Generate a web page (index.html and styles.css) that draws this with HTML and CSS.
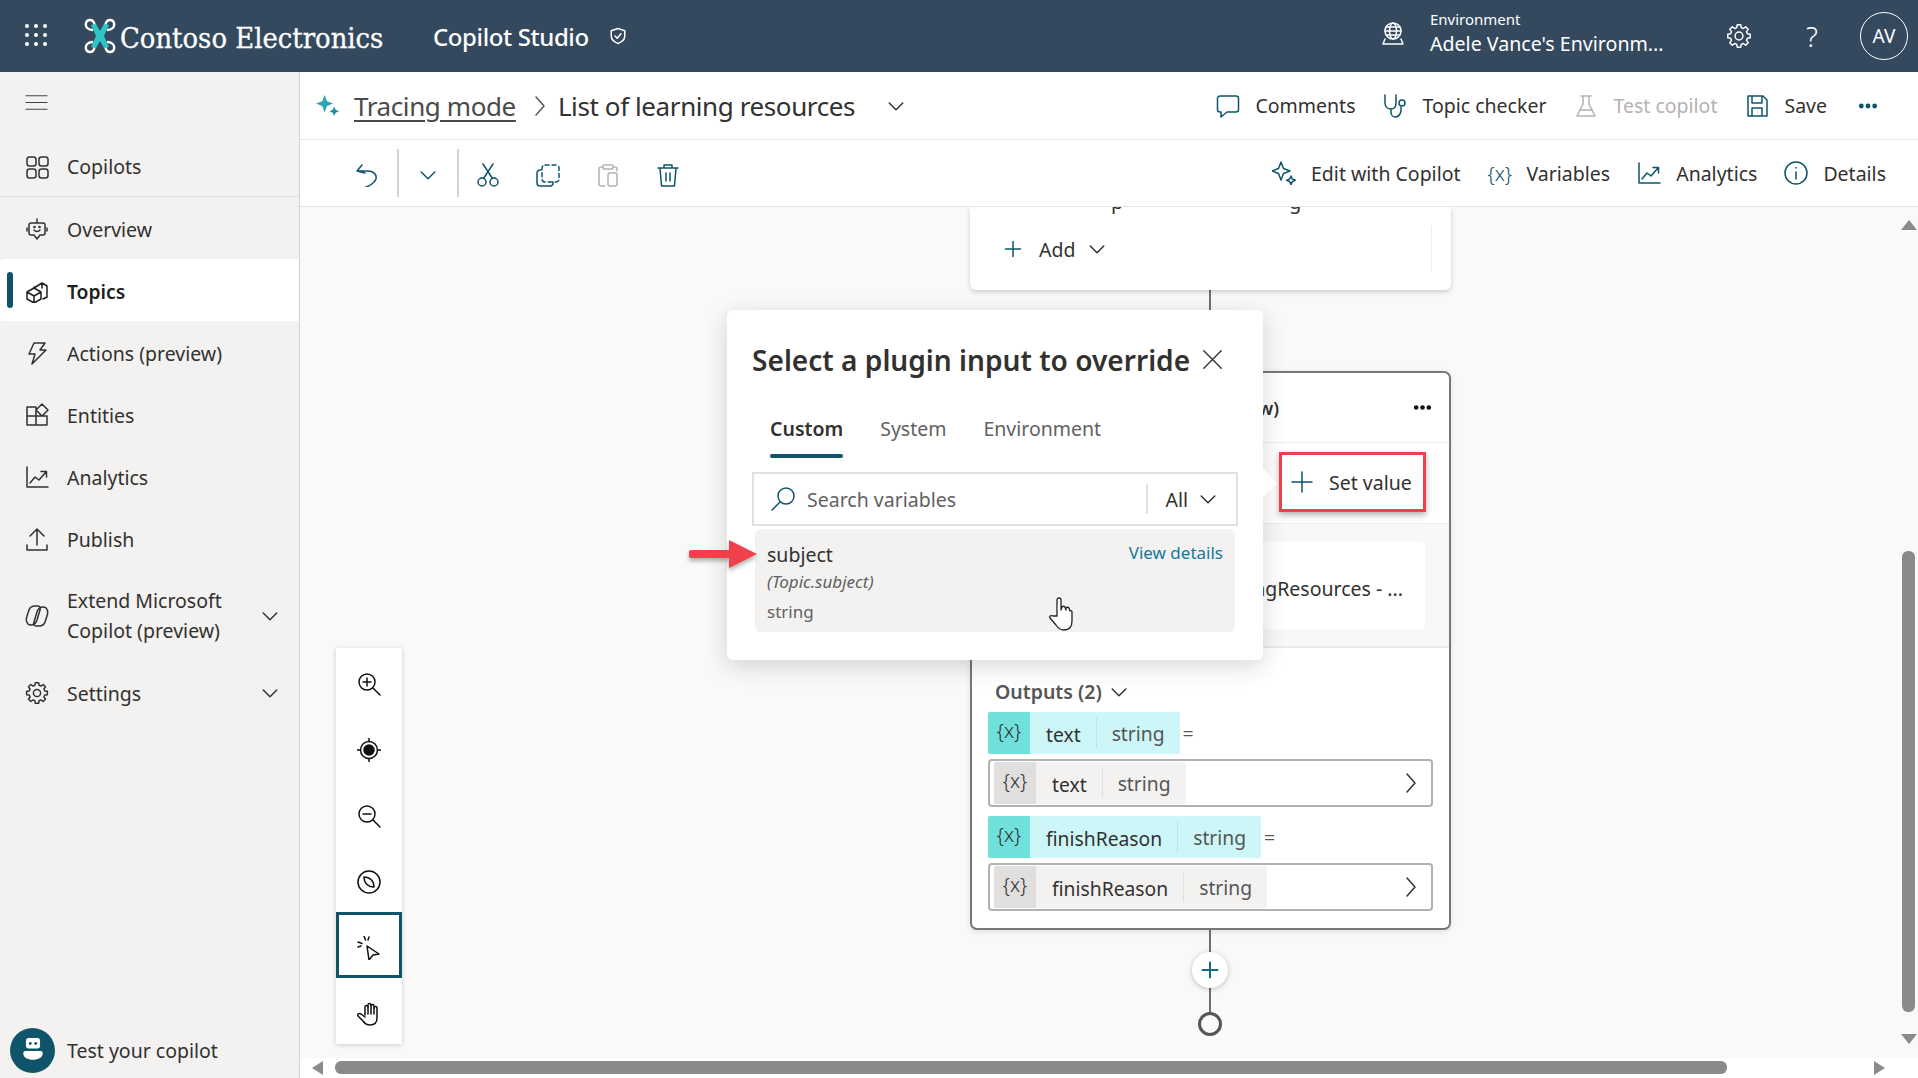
FILE: index.html
```html
<!DOCTYPE html>
<html lang="en">
<head>
  <meta charset="UTF-8">
  <title>Copilot Studio</title>
  <link rel="stylesheet" href="styles.css">
</head>
<body>
  <svg class="sprite" aria-hidden="true">
    <symbol id="chev" viewBox="0 0 24 24"><path d="M3 8l9 9 9-9"/></symbol>
    <symbol id="plus" viewBox="0 0 24 24"><path d="M12 2v20M2 12h20"/></symbol>
    <symbol id="gear" viewBox="0 0 24 24"><path d="M9.93 4.27 10.36 1.63 13.64 1.63 14.07 4.27 16 5.07 18.17 3.51 20.49 5.83 18.93 8 19.73 9.93 22.37 10.36 22.37 13.64 19.73 14.07 18.93 16 20.49 18.17 18.17 20.49 16 18.93 14.07 19.73 13.64 22.37 10.36 22.37 9.93 19.73 8 18.93 5.83 20.49 3.51 18.17 5.07 16 4.27 14.07 1.63 13.64 1.63 10.36 4.27 9.93 5.07 8 3.51 5.83 5.83 3.51 8 5.07Z"/><circle cx="12" cy="12" r="3.6"/></symbol>
    <symbol id="trend" viewBox="0 0 24 24"><path d="M2 2v20h21M5 18l5-6 4 3 7-8M16 6.5h5.5V12"/></symbol>
    <symbol id="dots" viewBox="0 0 24 24"><circle cx="4" cy="12" r="2" class="solid"/><circle cx="12" cy="12" r="2" class="solid"/><circle cx="20" cy="12" r="2" class="solid"/></symbol>
  </svg>

  <header class="topbar">
    <svg class="waffle" viewBox="0 0 22 22"><g fill="#fff"><circle cx="2" cy="2" r="2"/><circle cx="11" cy="2" r="2"/><circle cx="20" cy="2" r="2"/><circle cx="2" cy="11" r="2"/><circle cx="11" cy="11" r="2"/><circle cx="20" cy="11" r="2"/><circle cx="2" cy="20" r="2"/><circle cx="11" cy="20" r="2"/><circle cx="20" cy="20" r="2"/></g></svg>
    <svg class="logo" viewBox="0 0 32 36">
      <path d="M9 12C4 12 1 9 2 5s7-4 8 0l2 5M23 12c5 0 8-3 7-7s-7-4-8 0l-2 5M9 24c-5 0-8 3-7 7s7 4 8 0l2-5M23 24c5 0 8 3 7 7s-7 4-8 0l-2-5" fill="none" stroke="#fff" stroke-width="2.4"/>
      <path d="M7 7l5-1 4 7 4-7 5 1-5 11 5 11-5 1-4-7-4 7-5-1 5-11z" fill="#2cc4c4"/>
    </svg>
    <span class="brand">Contoso Electronics</span>
    <span class="product">Copilot Studio</span>
    <svg class="ic shield" viewBox="0 0 24 24"><path d="M12 2l9 3v7c0 5-4 8-9 10-5-2-9-5-9-10V5z"/><path d="M8 12l3 3 5-6"/></svg>
    <div class="env">
      <svg class="ic env-icon" viewBox="0 0 24 24"><circle cx="12" cy="9" r="8"/><ellipse cx="12" cy="9" rx="3.5" ry="8"/><path d="M4 9h16M5 5h14M5 13h14M4 17l-2 5h20l-2-5"/></svg>
      <div>
        <div class="env-label">Environment</div>
        <div class="env-name">Adele Vance's Environm...</div>
      </div>
    </div>
    <svg class="ic top-gear"><use href="#gear"/></svg>
    <span class="help">?</span>
    <span class="avatar">AV</span>
  </header>

  <div class="main">
    <nav class="sidebar">
      <div class="burger"><svg class="ic" viewBox="0 0 24 24"><path d="M1 5h22M1 12h22M1 19h22"/></svg></div>
      <a class="nav-item nav-first">
        <svg class="ic" viewBox="0 0 24 24"><rect x="2" y="2" width="9" height="9" rx="2.5"/><rect x="14" y="2" width="9" height="9" rx="2.5"/><rect x="2" y="14" width="9" height="9" rx="2.5"/><rect x="14" y="14" width="9" height="9" rx="2.5"/></svg>
        Copilots
      </a>
      <a class="nav-item">
        <svg class="ic" viewBox="0 0 24 24"><path d="M12 2v4M6 6h12a2 2 0 0 1 2 2v8a2 2 0 0 1-2 2h-3l-3 4-3-4H6a2 2 0 0 1-2-2V8a2 2 0 0 1 2-2zM2 11v3M22 11v3M9 13c1.500 2 4.500 2 6 0"/><circle cx="9.500" cy="10" r=".6"/><circle cx="14.500" cy="10" r=".6"/></svg>
        Overview
      </a>
      <a class="nav-item active">
        <svg class="ic" viewBox="0 0 24 24"><path d="M9 9l8-5 5 3v11l-4 2M9 9l0-1M17 4v5"/><path d="M2 13l7-4 7 4v7l-7 4-7-4zM2 13l7 4 7-4M9 17v7"/></svg>
        Topics
      </a>
      <a class="nav-item">
        <svg class="ic" viewBox="0 0 24 24"><path d="M9 2h11l-5 7h6L7 23l3-10H4z"/></svg>
        Actions (preview)
      </a>
      <a class="nav-item">
        <svg class="ic" viewBox="0 0 24 24"><path d="M2 4h9v9h11v9H2zM2 13h9v9M17 1l6 6-6 6-6-6z"/></svg>
        Entities
      </a>
      <a class="nav-item">
        <svg class="ic"><use href="#trend"/></svg>
        Analytics
      </a>
      <a class="nav-item">
        <svg class="ic" viewBox="0 0 24 24"><path d="M12 18V2M5 9l7-7 7 7M2 18v5h20v-5"/></svg>
        Publish
      </a>
      <a class="nav-item nav-tall">
        <svg class="ic" viewBox="0 0 24 24"><path d="M3 20c-2-2-2-5-1-8l2-6c1-3 3-4 6-4h3c2 0 3 2 2 4l-3 10c-1 3-3 5-6 5-1 0-2 0-3-1zM21 4c2 2 2 5 1 8l-2 6c-1 3-3 4-6 4h-3c-2 0-3-2-2-4l3-10c1-3 3-5 6-5 1 0 2 0 3 1z"/></svg>
        <span class="nav-label">Extend Microsoft<br>Copilot (preview)</span>
        <svg class="ic nav-chev"><use href="#chev"/></svg>
      </a>
      <a class="nav-item">
        <svg class="ic"><use href="#gear"/></svg>
        <span class="nav-label">Settings</span>
        <svg class="ic nav-chev"><use href="#chev"/></svg>
      </a>
      <div class="test-copilot">
        <span class="bot"><svg viewBox="0 0 24 24"><path d="M8 1h8a2.500 2.500 0 0 1 2.500 2.500V8a2.500 2.500 0 0 1-2.500 2.500H8A2.500 2.500 0 0 1 5.500 8V3.500A2.500 2.500 0 0 1 8 1zM5 13h14a2 2 0 0 1 2 2c0 4-4 6-9 6s-9-2-9-6a2 2 0 0 1 2-2z" fill="#fff"/><circle cx="9.500" cy="6" r="1.300" fill="#0f5469"/><circle cx="14.500" cy="6" r="1.300" fill="#0f5469"/></svg></span>
        Test your copilot
      </div>
    </nav>

    <div class="content">
      <div class="cmdbar">
        <div class="crumbs">
          <svg class="spark" viewBox="0 0 24 24"><path d="M9 1l2.500 6.500L18 10l-6.500 2.500L9 19l-2.500-6.500L0 10l6.500-2.500z" fill="#2aa6b0"/><path d="M19 13l1.500 3.500L24 18l-3.500 1.500L19 23l-1.500-3.500L14 18l3.500-1.500z" fill="#1c8f9c"/></svg>
          <a class="crumb-link">Tracing mode</a>
          <svg class="ic crumb-sep" viewBox="0 0 12 24"><path d="M2 3l8 9-8 9"/></svg>
          <span class="crumb-title">List of learning resources</span>
          <svg class="ic crumb-chev"><use href="#chev"/></svg>
        </div>
        <div class="cmds">
          <span class="cmd"><svg class="ic" viewBox="0 0 24 24"><path d="M4 2h16a2.500 2.500 0 0 1 2.500 2.500v11A2.500 2.500 0 0 1 20 18h-9l-6 5v-5H4a2.500 2.500 0 0 1-2.500-2.500v-11A2.500 2.500 0 0 1 4 2z"/></svg>Comments</span>
          <span class="cmd"><svg class="ic" viewBox="0 0 24 24"><path d="M2 1v8c0 4 3 6 6 6s5-2 5-6V1M8 15v3c0 3 2 5 4 5s5-1 6-6v-4"/><circle cx="19" cy="9" r="3"/></svg>Topic checker</span>
          <span class="cmd cmd-off"><svg class="ic" viewBox="0 0 24 24"><path d="M7 2h10M9 2v8L3 22h18L15 10V2M6 16h12"/></svg>Test copilot</span>
          <span class="cmd"><svg class="ic" viewBox="0 0 24 24"><path d="M3 2h15l4 4v16H3zM7 2v7h10V2M7 22v-8h10v8"/></svg>Save</span>
          <svg class="ic more"><use href="#dots"/></svg>
        </div>
      </div>
      <div class="cmdbar toolbar">
        <div class="tools">
          <svg class="ic tool" viewBox="0 0 24 24"><path d="M7 2L2 8l8 2M2 8h11c5 0 9 3 8 8-1 3-6 7-10 8"/></svg>
          <span class="tool-sep"></span>
          <svg class="ic tool-chev"><use href="#chev"/></svg>
          <span class="tool-sep"></span>
          <svg class="ic tool" viewBox="0 0 24 24"><circle cx="6" cy="19" r="4"/><circle cx="18" cy="19" r="4"/><path d="M7.500 15.500L17 1M16.500 15.500L7 1"/></svg>
          <svg class="ic tool" viewBox="0 0 24 24"><path d="M5 7H4a3 3 0 0 0-3 3v10a3 3 0 0 0 3 3h10a3 3 0 0 0 3-3v-1"/><rect x="6" y="2" width="17" height="17" rx="3" stroke-dasharray="4 3"/></svg>
          <svg class="ic tool tool-off" viewBox="0 0 24 24"><path d="M7 4H5a2 2 0 0 0-2 2v15a2 2 0 0 0 2 2h4M17 4h2a2 2 0 0 1 2 2v2"/><rect x="7" y="2" width="10" height="4" rx="1"/><rect x="12" y="10" width="9" height="13" rx="2"/></svg>
          <svg class="ic tool" viewBox="0 0 24 24"><path d="M2 5h20M8 5V2h8v3M4 5l1.500 18h13L20 5M10 10v8M14 10v8"/></svg>
        </div>
        <div class="cmds cmds-low">
          <span class="cmd"><svg class="ic" viewBox="0 0 24 24"><path d="M9 1l2.500 6.500L18 10l-6.500 2.500L9 19l-2.500-6.500L0 10l6.500-2.500zM19 15l1.300 3 3 1.300-3 1.300-1.300 3-1.300-3-3-1.300 3-1.300z"/></svg>Edit with Copilot</span>
          <span class="cmd"><span class="var-ic">{x}</span>Variables</span>
          <span class="cmd"><svg class="ic"><use href="#trend"/></svg>Analytics</span>
          <span class="cmd"><svg class="ic" viewBox="0 0 24 24"><circle cx="12" cy="12" r="11"/><path d="M12 11v7M12 6.500v.5"/></svg>Details</span>
        </div>
      </div>

      <div class="canvas">
        <span class="link link-a"></span>
        <span class="link link-b"></span>
        <span class="link link-c"></span>

        <div class="card-top">
          <span class="clip-text clip-p">p</span>
          <span class="clip-text clip-g">g</span>
          <div class="add-row">
            <svg class="ic add-plus"><use href="#plus"/></svg>
            Add
            <svg class="ic add-chev"><use href="#chev"/></svg>
          </div>
        </div>

        <div class="node">
          <div class="node-head">
            <span class="node-title">Plugin action (preview)</span>
            <svg class="ic node-more"><use href="#dots"/></svg>
          </div>
          <div class="node-setrow">
            <button class="set-value"><svg class="ic"><use href="#plus"/></svg>Set value</button>
          </div>
          <div class="node-inputs">
            <div class="inputs-card">GetLearningResources - ...</div>
          </div>
          <div class="node-outputs">
            <div class="outputs-label">Outputs (2)<svg class="ic outputs-chev"><use href="#chev"/></svg></div>
            <div class="out-line">
              <span class="chip"><span class="chip-ic">{x}</span><span class="chip-name">text</span><span class="chip-type">string</span></span>
              <span class="equals">=</span>
            </div>
            <div class="out-box">
              <span class="chip chip-grey"><span class="chip-ic">{x}</span><span class="chip-name">text</span><span class="chip-type">string</span></span>
              <svg class="ic box-chev" viewBox="0 0 12 24"><path d="M2 3l8 9-8 9"/></svg>
            </div>
            <div class="out-line">
              <span class="chip"><span class="chip-ic">{x}</span><span class="chip-name">finishReason</span><span class="chip-type">string</span></span>
              <span class="equals">=</span>
            </div>
            <div class="out-box">
              <span class="chip chip-grey"><span class="chip-ic">{x}</span><span class="chip-name">finishReason</span><span class="chip-type">string</span></span>
              <svg class="ic box-chev" viewBox="0 0 12 24"><path d="M2 3l8 9-8 9"/></svg>
            </div>
          </div>
        </div>

        <button class="add-node"><svg class="ic"><use href="#plus"/></svg></button>
        <span class="end-node"></span>

        <div class="zoom-tools">
          <div class="zt"><svg class="ic" viewBox="0 0 24 24"><circle cx="10" cy="10" r="8"/><path d="M6 10h8M10 6v8M16 16l7 7"/></svg></div>
          <div class="zt"><svg class="ic" viewBox="0 0 24 24"><circle cx="12" cy="12" r="8.500"/><circle cx="12" cy="12" r="5" class="solid"/><path d="M12 0v3.500M12 20.500V24M0 12h3.500M20.500 12H24"/></svg></div>
          <div class="zt"><svg class="ic" viewBox="0 0 24 24"><circle cx="10" cy="10" r="8"/><path d="M6 10h8M16 16l7 7"/></svg></div>
          <div class="zt"><svg class="ic" viewBox="0 0 24 24"><circle cx="12" cy="12" r="11"/><path d="M7 7c6 0 10 4 10 10-6 0-10-4-10-10z"/></svg></div>
          <div class="zt zt-on"><svg class="ic" viewBox="0 0 24 24"><path d="M10 10l12 8-6 1-4 5zM7 0l1.500 4M1 6l4 1.500"/><path d="M12 1l-1 3M1 11l3-1"/></svg></div>
          <div class="zt"><svg class="ic" viewBox="0 0 24 24"><path d="M8 13V5a1.500 1.500 0 0 1 3 0V3a1.500 1.500 0 0 1 3 0v1a1.500 1.500 0 0 1 3 0v2a1.500 1.500 0 0 1 3 0v10c0 5-3 7-7 7-3 0-5-1-7-4l-5-5c-1-2 1-3 3-2l4 3"/><path d="M11 5v7M14 4v8M17 6v6"/></svg></div>
        </div>

        <div class="dialog">
          <span class="beak"></span>
          <div class="dialog-head">
            <h2>Select a plugin input to override</h2>
            <svg class="ic dialog-close" viewBox="0 0 24 24"><path d="M2 2l20 20M22 2L2 22"/></svg>
          </div>
          <div class="tabs">
            <span class="tab tab-on">Custom</span>
            <span class="tab">System</span>
            <span class="tab">Environment</span>
          </div>
          <div class="search">
            <svg class="ic search-ic" viewBox="0 0 24 24"><circle cx="15" cy="9" r="8"/><path d="M9 15l-8 8"/></svg>
            <span class="search-ph">Search variables</span>
            <span class="search-filter">All<svg class="ic filter-chev"><use href="#chev"/></svg></span>
          </div>
          <div class="var-item">
            <div class="var-top"><span class="var-name">subject</span><a class="var-link">View details</a></div>
            <div class="var-path">(Topic.subject)</div>
            <div class="var-type">string</div>
          </div>
        </div>

        <svg class="red-arrow" viewBox="0 0 70 30"><path d="M3 11h37V1l28 14-28 14V19H3a4 4 0 0 1 0-8z" fill="#f0404c"/></svg>
        <svg class="hand" viewBox="0 0 26 34"><path d="M8 19V3a2 2 0 0 1 4 0v10l1-3c1-1 2-1 3 0l1 3v-2c1-1 2-1 3 0l1 3c1-1 2 0 2 1v9c0 6-3 9-8 9-4 0-6-2-8-5l-6-7c-1-2 1-3 3-2z" fill="#fff" stroke="#222" stroke-width="1.300" stroke-linejoin="round"/></svg>

        <div class="scroll-v"><span class="arrow-up"></span><span class="thumb-v"></span><span class="arrow-down"></span></div>
        <div class="scroll-h"><span class="arrow-left"></span><span class="thumb-h"></span><span class="arrow-right"></span></div>
      </div>
    </div>
  </div>
</body>
</html>
```

FILE: styles.css
```css
* {
  box-sizing: border-box;
}
html, body {
  margin: 0;
  height: 1078px;
  overflow: hidden;
}
body {
  font-family: "Noto Sans", "Open Sans", sans-serif;
  font-size: 19.500px;
  color: #323130;
  display: flex;
  flex-direction: column;
}
.sprite {
  display: none;
}
.ic {
  fill: none;
  stroke: currentColor;
  stroke-width: 1.5;
  stroke-linecap: round;
  stroke-linejoin: round;
  flex: none;
  width: 24px;
  height: 24px;
}
.solid {
  fill: currentColor;
}
symbol path, symbol circle {
  vector-effect: non-scaling-stroke;
}

/* header */
.topbar {
  height: 72px;
  flex: none;
  background: #34495e;
  color: #fff;
  display: flex;
  align-items: center;
  padding: 0 10px 0 25px;
}
.waffle {
  width: 22px;
  height: 22px;
  margin-right: 37px;
  margin-top: -2px;
}
.logo {
  width: 32px;
  height: 36px;
}
.brand {
  font-family: "DejaVu Serif", "Liberation Serif", serif;
  font-stretch: condensed;
  font-size: 28.800px;
  -webkit-text-stroke: .3px #fff;
  margin-left: 4px;
  padding-top: 3px;
  width: 313px;
  white-space: nowrap;
}
.product {
  font-size: 24px;
  font-weight: 500;
  letter-spacing: -.4px;
}
.shield {
  width: 18px;
  height: 18px;
  margin-left: 20px;
  stroke-width: 2;
}
.env {
  margin-left: auto;
  display: flex;
  align-items: center;
  gap: 25px;
  margin-top: -4px;
}
.env-icon {
  width: 24px;
  height: 24px;
}
.env-label {
  font-size: 15px;
  line-height: 20px;
}
.env-name {
  font-size: 19.600px;
  line-height: 30px;
  width: 238px;
  white-space: nowrap;
}
.top-gear {
  margin-left: 58px;
  width: 26px;
  height: 26px;
}
.help {
  font-size: 28px;
  font-weight: 300;
  margin-left: 54px;
  width: 54px;
}
.avatar {
  width: 48px;
  height: 48px;
  border: 1.5px solid #fff;
  border-radius: 50%;
  display: flex;
  align-items: center;
  justify-content: center;
  font-size: 19px;
}

/* left nav */
.main {
  flex: 1;
  display: flex;
  min-height: 0;
}
.sidebar {
  width: 300px;
  flex: none;
  background: #f3f2f1;
  border-right: 1px solid #d6d4d2;
  display: flex;
  flex-direction: column;
}
.burger {
  height: 62px;
  padding: 19px 0 0 25px;
  color: #444;
}
.burger .ic {
  width: 23px;
  height: 23px;
  stroke-width: 1.2;
}
.nav-item {
  height: 62px;
  flex: none;
  display: flex;
  align-items: center;
  padding: 0 20px 0 25px;
  gap: 18px;
  position: relative;
}
.nav-first {
  height: 63px;
  padding-top: 3px;
  border-bottom: 1.5px solid #dddbd9;
  margin-bottom: 1px;
}
.nav-item.active {
  background: #fff;
  border-radius: 4px 0 0 4px;
  font-size: 19.300px;
  font-weight: 600;
  color: #201f1e;
  margin-top: -1px;
  margin-bottom: 1px;
  padding-top: 2px;
}
.nav-item.active::before {
  content: "";
  position: absolute;
  left: 7px;
  top: 13px;
  bottom: 13px;
  width: 6px;
  border-radius: 3px;
  background: #0f5469;
}
.nav-tall {
  height: 92px;
  line-height: 30px;
}
.nav-label {
  flex: 1;
}
.nav-chev {
  width: 18px;
  height: 18px;
}
.test-copilot {
  margin-top: auto;
  height: 56px;
  display: flex;
  align-items: center;
  gap: 12px;
  padding: 0 0 0 10px;
}
.bot {
  width: 45px;
  height: 45px;
  border-radius: 50%;
  background: #0f5469;
  display: flex;
  align-items: center;
  justify-content: center;
}
.bot svg {
  width: 26px;
  height: 26px;
}

/* command bars */
.content {
  flex: 1;
  min-width: 0;
  display: flex;
  flex-direction: column;
}
.cmdbar {
  height: 68px;
  flex: none;
  display: flex;
  align-items: center;
  justify-content: space-between;
  border-bottom: 1.5px solid #e8e6e4;
  padding: 0 40px 0 16px;
  background: #fff;
}
.toolbar {
  height: 67px;
  padding: 0 32px 0 55px;
}
.crumbs {
  display: flex;
  align-items: center;
}
.spark {
  width: 23px;
  height: 23px;
  margin-right: 15px;
}
.crumb-link {
  font-size: 26px;
  color: #4a4a4a;
  text-decoration: underline;
  text-underline-offset: 4px;
  text-decoration-thickness: 1.5px;
  letter-spacing: -.4px;
}
.crumb-sep {
  width: 12px;
  height: 24px;
  margin: 0 12px 0 18px;
  color: #555;
}
.crumb-title {
  font-size: 26px;
  letter-spacing: -.4px;
}
.crumb-chev {
  width: 18px;
  height: 18px;
  margin-left: 32px;
}
.cmds {
  display: flex;
  align-items: center;
  gap: 28px;
}
.cmds-low {
  gap: 27px;
}
.cmd {
  display: flex;
  align-items: center;
  gap: 15px;
  white-space: nowrap;
}
.cmd .ic, .tool, .var-ic, .more {
  color: #0f5469;
}
.cmd-off, .cmd-off .ic, .tool-off {
  color: #b5b3b1;
}
.more {
  margin-left: 3px;
  width: 20px;
  height: 20px;
}
.tools {
  display: flex;
  align-items: center;
  padding-top: 4px;
}
.tool {
  margin-right: 36px;
}
.tool:first-child {
  margin-right: 18px;
}
.tool-sep {
  width: 2px;
  height: 48px;
  margin-top: -4px;
  background: #d6d4d2;
}
.tool-chev {
  width: 18px;
  height: 18px;
  color: #0f5469;
  margin: 0 20px;
}
.tool-chev + .tool-sep {
  margin-right: 17px;
}
.var-ic {
  font-size: 20px;
  width: 24px;
  font-weight: 300;
}

/* canvas */
.canvas {
  flex: 1;
  position: relative;
  overflow: hidden;
  background: #faf9f8;
}
.link {
  position: absolute;
  left: 909px;
  width: 2px;
  background: #6f6e6d;
}
.link-a {
  top: 83px;
  height: 81px;
}
.link-b {
  top: 722px;
  height: 30px;
}
.link-c {
  top: 780px;
  height: 30px;
}
.card-top {
  position: absolute;
  left: 670px;
  top: 0;
  width: 481px;
  height: 83px;
  background: #fff;
  border-radius: 0 0 6px 6px;
  box-shadow: 0 2px 5px rgba(0, 0, 0, .18);
  overflow: hidden;
  padding: 19px 19px 0 34px;
}
.clip-text {
  position: absolute;
  top: -19px;
  font-size: 20px;
}
.clip-p {
  left: 141px;
}
.clip-g {
  left: 319px;
}
.add-row {
  display: flex;
  align-items: center;
  height: 46px;
  border-right: 1px solid #f0efee;
}
.add-plus {
  width: 18px;
  height: 18px;
  color: #0f5469;
  margin-right: 17px;
}
.add-chev {
  width: 18px;
  height: 18px;
  margin-left: 13px;
}
.node {
  position: absolute;
  left: 670px;
  top: 164px;
  width: 481px;
  height: 559px;
  background: #fff;
  border: 2px solid #77767a;
  border-radius: 7px;
  box-shadow: 0 2px 6px rgba(0, 0, 0, .1);
  display: flex;
  flex-direction: column;
}
.node-head {
  height: 70px;
  flex: none;
  display: flex;
  align-items: center;
  border-bottom: 1px solid #f0efee;
}
.node-title {
  width: 307px;
  text-align: right;
  font-weight: 600;
  font-size: 18px;
  white-space: nowrap;
}
.node-more {
  margin-left: auto;
  margin-right: 17px;
  width: 19px;
  height: 19px;
  color: #111;
}
.node-setrow {
  height: 81px;
  flex: none;
  display: flex;
  justify-content: flex-end;
  padding: 9px 23px 0 0;
  border-bottom: 1px solid #eeedeb;
}
.set-value {
  width: 147px;
  height: 60px;
  background: #fff;
  border: 3.500px solid #f0404c;
  box-shadow: 0 3px 6px rgba(0, 0, 0, .3);
  font: inherit;
  color: inherit;
  display: flex;
  align-items: center;
  gap: 15px;
  padding: 0 0 0 8px;
  white-space: nowrap;
}
.set-value .ic {
  color: #0f5469;
}
.node-inputs {
  height: 124px;
  flex: none;
  background: #f9f8f7;
  border-bottom: 2px solid #eceae8;
  padding: 18px 24px 0 23px;
}
.inputs-card {
  height: 87px;
  background: #fff;
  border-radius: 4px;
  display: flex;
  align-items: center;
  justify-content: flex-end;
  padding: 5px 22px 0 0;
  white-space: nowrap;
}
.node-outputs {
  padding: 0 16px;
}
.outputs-label {
  height: 64px;
  padding: 24px 0 0 7px;
  line-height: 30px;
  font-weight: 600;
  font-size: 19.500px;
  color: #555;
  display: flex;
  align-items: center;
  gap: 8px;
}
.outputs-chev {
  width: 18px;
  height: 18px;
  color: #333;
}
.out-line {
  display: flex;
  align-items: center;
  height: 42px;
  gap: 3px;
}
.equals {
  color: #555;
}
.chip {
  display: inline-flex;
  align-items: center;
  height: 42px;
  background: #ccf6f7;
  border-radius: 2px;
  white-space: nowrap;
  font-size: 19.300px;
}
.chip-ic {
  width: 42px;
  height: 100%;
  background: #6fe0dc;
  display: flex;
  align-items: center;
  justify-content: center;
  font-size: 20px;
  font-weight: 300;
  padding-bottom: 5px;
  border-radius: 2px 0 0 2px;
}
.chip-name {
  padding: 2px 15px 0 16px;
  height: 100%;
  display: flex;
  align-items: center;
}
.chip-type {
  color: #555;
  padding: 2px 15px 0;
  height: 30px;
  line-height: 28px;
  border-left: 1px solid rgba(0, 0, 0, .08);
}
.chip-grey {
  background: #f3f2f1;
}
.chip-grey .chip-ic {
  background: #e1dfdd;
}
.out-box {
  height: 48px;
  margin: 5px 0 9px;
  border: 2px solid #b3b1af;
  border-radius: 4px;
  display: flex;
  align-items: center;
  justify-content: space-between;
  padding: 0 14px 0 4px;
}
.box-chev {
  width: 12px;
  height: 24px;
}
.add-node {
  position: absolute;
  left: 892px;
  top: 745px;
  width: 36px;
  height: 36px;
  border: 0;
  padding: 9px;
  border-radius: 50%;
  background: #fff;
  color: #0f6a84;
  box-shadow: 0 1px 5px rgba(0, 0, 0, .25);
}
.add-node .ic {
  display: block;
  width: 18px;
  height: 18px;
  stroke-width: 2;
}
.end-node {
  position: absolute;
  left: 898px;
  top: 805px;
  width: 24px;
  height: 24px;
  border: 3.500px solid #555;
  border-radius: 50%;
  background: #faf9f8;
}

/* zoom buttons */
.zoom-tools {
  position: absolute;
  left: 36px;
  top: 441px;
  width: 66px;
  background: #fff;
  box-shadow: 0 1px 5px rgba(0, 0, 0, .18);
  display: flex;
  flex-direction: column;
}
.zt {
  height: 66px;
  padding-top: 5px;
  display: flex;
  align-items: center;
  justify-content: center;
  color: #111;
}
.zt-on {
  border: 3.500px solid #0f5469;
}

/* dialog */
.dialog {
  position: absolute;
  left: 427px;
  top: 103px;
  width: 536px;
  height: 350px;
  background: #fff;
  border-radius: 6px;
  box-shadow: 0 6px 24px rgba(0, 0, 0, .16);
  padding: 0 25px;
}
.beak {
  position: absolute;
  right: -10px;
  top: 163px;
  width: 20px;
  height: 20px;
  background: #fff;
  transform: rotate(45deg);
}
.dialog-head {
  height: 100px;
  display: flex;
  align-items: center;
  position: relative;
}
.dialog-head h2 {
  margin: 0;
  font-size: 28.100px;
  font-weight: 600;
  white-space: nowrap;
}
.dialog-close {
  margin-left: 12px;
  width: 21px;
  height: 21px;
  margin-top: -2px;
  stroke-width: 1.6;
}
.tabs {
  display: flex;
  gap: 37px;
  padding-left: 18px;
  height: 62px;
}
.tab {
  color: #616161;
  height: 48px;
  padding-top: 5px;
  position: relative;
}
.tab-on {
  color: #323130;
  font-weight: 600;
}
.tab-on::after {
  content: "";
  position: absolute;
  left: 0;
  right: 0;
  bottom: 0;
  height: 4px;
  border-radius: 2px;
  background: #0f5469;
}
.search {
  height: 54px;
  border: 2px solid #e1dfdd;
  display: flex;
  align-items: center;
  padding: 0 19px 0 17px;
}
.search-ic {
  color: #0f5469;
  margin-right: 12px;
}
.search-ph {
  flex: 1;
  color: #616161;
}
.search-filter {
  height: 30px;
  border-left: 2px solid #e1dfdd;
  padding-left: 17px;
  display: flex;
  align-items: center;
  gap: 11px;
}
.filter-chev {
  width: 18px;
  height: 18px;
}
.var-item {
  margin: 3px 3px 0;
  height: 103px;
  background: #f3f2f1;
  border-radius: 6px;
  padding: 12px 12px 0;
}
.var-top {
  display: flex;
  justify-content: space-between;
  line-height: 28px;
}
.var-link {
  font-size: 17px;
  color: #13799a;
  margin-top: -2px;
}
.var-path {
  font-size: 17px;
  font-style: italic;
  color: #616161;
  line-height: 26px;
}
.var-type {
  font-size: 17px;
  color: #616161;
  line-height: 34px;
}

/* annotation + pointer */
.red-arrow {
  position: absolute;
  left: 389px;
  top: 332px;
  width: 70px;
  height: 30px;
  filter: drop-shadow(0 3px 2px rgba(0, 0, 0, .3));
}
.hand {
  position: absolute;
  left: 749px;
  top: 390px;
  width: 26px;
  height: 34px;
}

/* scrollbars */
.scroll-v {
  position: absolute;
  right: 0;
  top: 0;
  bottom: 20px;
  width: 21px;
}
.thumb-v {
  position: absolute;
  left: 5px;
  top: 344px;
  width: 13px;
  height: 461px;
  border-radius: 6px;
  background: #8a8a8a;
}
.arrow-up, .arrow-down, .arrow-left, .arrow-right {
  position: absolute;
  width: 0;
  height: 0;
  border: 0 solid transparent;
}
.arrow-up {
  left: 4px;
  top: 13px;
  border-width: 0 8px 10px;
  border-bottom-color: #8a8a8a;
}
.arrow-down {
  left: 4px;
  top: 827px;
  border-width: 10px 8px 0;
  border-top-color: #8a8a8a;
}
.scroll-h {
  position: absolute;
  left: 0;
  right: 0;
  bottom: 0;
  height: 20px;
  background: #fff;
}
.thumb-h {
  position: absolute;
  left: 35px;
  top: 3px;
  width: 1392px;
  height: 13px;
  border-radius: 6px;
  background: #8a8a8a;
}
.arrow-left {
  left: 12px;
  top: 3px;
  border-width: 7px 11px 7px 0;
  border-right-color: #8a8a8a;
}
.arrow-right {
  left: 1574px;
  top: 3px;
  border-width: 7px 0 7px 11px;
  border-left-color: #8a8a8a;
}
```
